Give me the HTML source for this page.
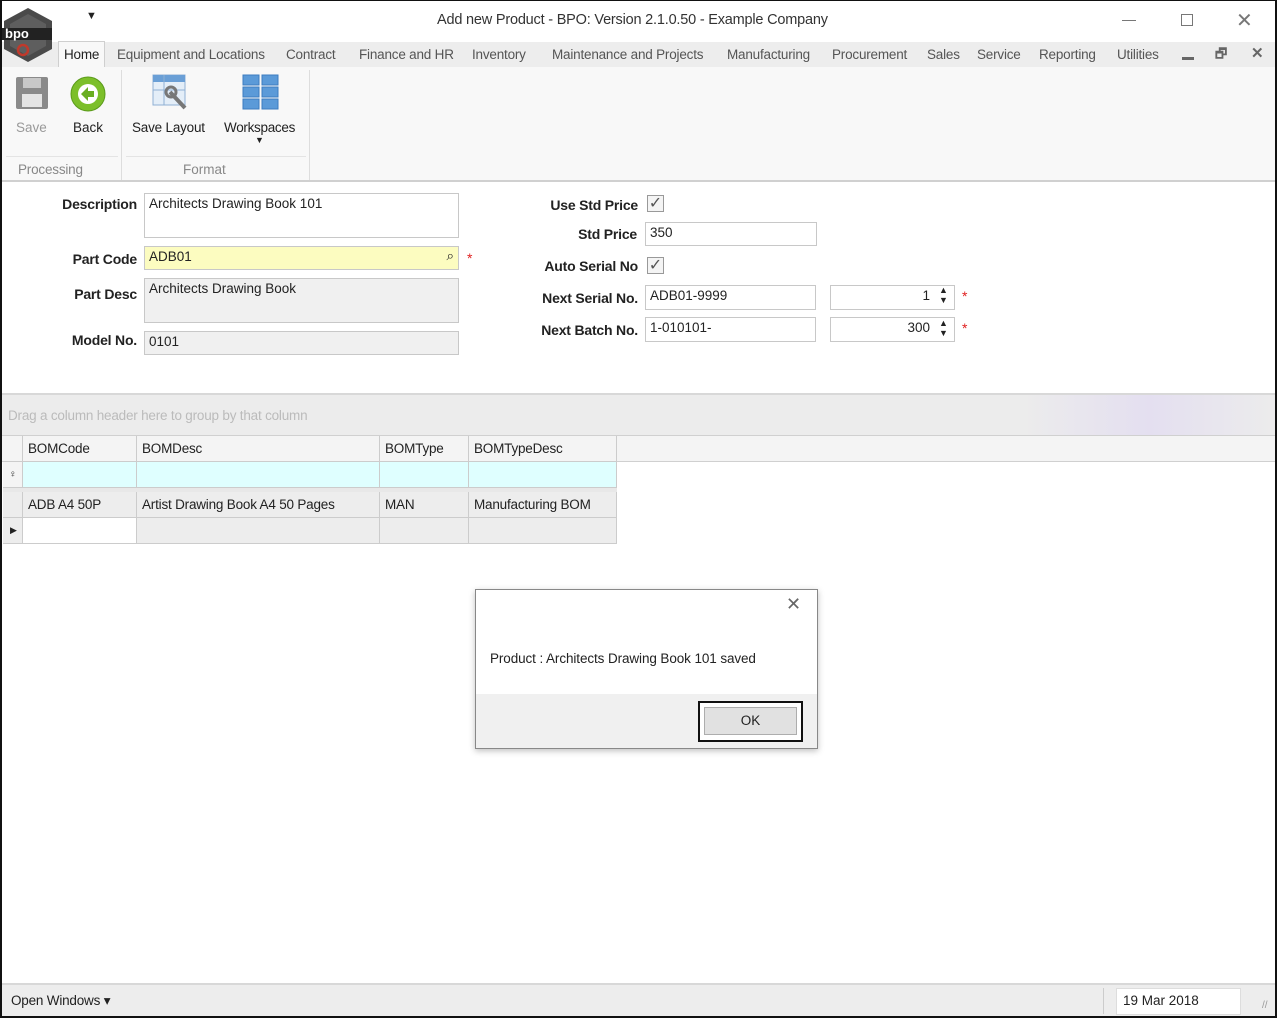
<!DOCTYPE html>
<html><head><meta charset="utf-8"><style>
*{box-sizing:border-box;margin:0;padding:0}
body{width:1277px;height:1018px;position:relative;overflow:hidden;background:#fff;font-family:"Liberation Sans",sans-serif;font-size:14px;color:#222}
.a{position:absolute;white-space:nowrap}
.win{position:absolute;left:0;top:0;width:1277px;height:1018px;border:2px solid #111;border-top-width:1px}
.box{position:absolute;border:1px solid #c8c8c8;background:#fff;padding:2px 4px;font-size:13.5px}
.lbl{position:absolute;font-weight:bold;font-size:14px;text-align:right;white-space:nowrap;letter-spacing:-0.2px}
.cb{position:absolute;width:17px;height:17px;border:1px solid #999;background:#f4f4f4;font-size:16px;line-height:15px;text-align:center;color:#555}
.star{position:absolute;color:#e02020;font-size:14px}
.cell{position:absolute;border-right:1px solid #ccc;border-bottom:1px solid #ccc;padding:5px 5px;font-size:13.5px;white-space:nowrap;letter-spacing:-0.2px}
.tab{position:absolute;top:47px;color:#555;font-size:13.5px;letter-spacing:-0.2px;white-space:nowrap}
</style></head><body>
<!-- title -->
<div class="a" style="left:0;top:0;width:1277px;height:42px;background:#fff"></div>
<div class="a" style="left:86px;top:10px;font-size:11px">▼</div>
<div class="a" style="left:437px;top:12px;font-size:14.5px;color:#333;letter-spacing:-0.2px">Add new Product - BPO: Version 2.1.0.50 - Example Company</div>
<div class="a" style="left:1122px;top:20px;width:14px;height:1px;background:#777"></div>
<div class="a" style="left:1181px;top:14px;width:12px;height:12px;border:1px solid #777"></div>
<div class="a" style="left:1236px;top:8px;font-size:20px;color:#777">✕</div>
<!-- tabs -->
<div class="a" style="left:0;top:42px;width:1277px;height:25px;background:#ededed"></div>
<div class="a" style="left:58px;top:41px;width:47px;height:27px;background:#f8f8f8;border:1px solid #cfcfcf;border-bottom:none"></div>
<div class="tab" style="left:64px;color:#222">Home</div>
<div class="tab" style="left:117px">Equipment and Locations</div>
<div class="tab" style="left:286px">Contract</div>
<div class="tab" style="left:359px">Finance and HR</div>
<div class="tab" style="left:472px">Inventory</div>
<div class="tab" style="left:552px">Maintenance and Projects</div>
<div class="tab" style="left:727px">Manufacturing</div>
<div class="tab" style="left:832px">Procurement</div>
<div class="tab" style="left:927px">Sales</div>
<div class="tab" style="left:977px">Service</div>
<div class="tab" style="left:1039px">Reporting</div>
<div class="tab" style="left:1117px">Utilities</div>
<div class="a" style="left:1182px;top:57px;width:12px;height:3px;background:#666"></div>
<div class="a" style="left:1215px;top:45px;font-size:13px;color:#666;font-weight:bold">🗗</div>
<div class="a" style="left:1251px;top:44px;font-size:15px;color:#666;font-weight:bold">✕</div>
<svg class="a" style="left:2px;top:6px" width="52" height="58" viewBox="0 0 52 58"><polygon points="26,2 50,15 50,43 26,56 2,43 2,15" fill="#4a4a4a"/><polygon points="26,8 44,18 44,40 26,50 8,40 8,18" fill="#5e5e5e"/><rect x="0" y="22" width="50" height="12" fill="#222"/><text x="3" y="32" font-size="13" fill="#fff" font-family="Liberation Sans" font-weight="bold">bpo</text><circle cx="21" cy="44" r="5" fill="none" stroke="#c0392b" stroke-width="2.5"/></svg>
<!-- ribbon -->
<div class="a" style="left:0;top:67px;width:1277px;height:115px;background:#f8f8f8;border-bottom:2px solid #d0d0d0"></div>
<div class="a" style="left:121px;top:70px;width:1px;height:110px;background:#ddd"></div>
<div class="a" style="left:309px;top:70px;width:1px;height:110px;background:#ddd"></div>
<div class="a" style="left:6px;top:156px;width:112px;height:1px;background:#e4e4e4"></div>
<div class="a" style="left:126px;top:156px;width:180px;height:1px;background:#e4e4e4"></div>
<svg class="a" style="left:15px;top:76px" width="34" height="34"><rect x="1" y="1" width="32" height="32" rx="2" fill="#8a8a8a"/><rect x="8" y="2" width="18" height="10" fill="#c8c8c8"/><rect x="7" y="18" width="20" height="13" fill="#e4e4e4"/></svg>
<svg class="a" style="left:69px;top:75px" width="38" height="38"><circle cx="19" cy="19" r="17" fill="#7cbf2a" stroke="#5a9a1a"/><circle cx="19" cy="19" r="10" fill="#fff"/><polygon points="12,19 19,12 19,16 25,16 25,22 19,22 19,26" fill="#6aae22"/></svg>
<svg class="a" style="left:152px;top:74px" width="38" height="38"><rect x="1" y="1" width="32" height="30" fill="#e4eef8" stroke="#8fb0d4"/><rect x="1" y="1" width="32" height="7" fill="#6a9fd6"/><line x1="12" y1="1" x2="12" y2="31" stroke="#8fb0d4"/><line x1="1" y1="16" x2="33" y2="16" stroke="#8fb0d4"/><path d="M18 18 L33 34" stroke="#777" stroke-width="4"/><circle cx="19" cy="18" r="5" fill="none" stroke="#777" stroke-width="3"/></svg>
<svg class="a" style="left:242px;top:74px" width="38" height="38"><g fill="#5b9ad8" stroke="#3d7cc0"><rect x="1" y="1" width="16" height="10"/><rect x="20" y="1" width="16" height="10"/><rect x="1" y="13" width="16" height="10"/><rect x="20" y="13" width="16" height="10"/><rect x="1" y="25" width="16" height="10"/><rect x="20" y="25" width="16" height="10"/></g></svg>
<div class="a" style="left:16px;top:120px;color:#999;font-size:13.5px">Save</div>
<div class="a" style="left:73px;top:120px;font-size:13.5px">Back</div>
<div class="a" style="left:132px;top:120px;font-size:13.5px;letter-spacing:-0.2px">Save Layout</div>
<div class="a" style="left:224px;top:120px;font-size:13.5px;letter-spacing:-0.3px">Workspaces</div>
<div class="a" style="left:255px;top:135px;font-size:9px">▼</div>
<div class="a" style="left:18px;top:162px;color:#888;font-size:13.5px;letter-spacing:-0.2px">Processing</div>
<div class="a" style="left:183px;top:162px;color:#888;font-size:13.5px">Format</div>
<!-- form left -->
<div class="lbl" style="left:40px;width:97px;top:196px">Description</div>
<div class="box" style="left:144px;top:193px;width:315px;height:45px">Architects Drawing Book 101</div>
<div class="lbl" style="left:40px;width:97px;top:251px">Part Code</div>
<div class="box" style="left:144px;top:246px;width:315px;height:24px;background:#fcfcc0">ADB01<span style="position:absolute;right:4px;top:1px">⌕</span></div>
<div class="star" style="left:467px;top:250px">*</div>
<div class="lbl" style="left:40px;width:97px;top:286px">Part Desc</div>
<div class="box" style="left:144px;top:278px;width:315px;height:45px;background:#f0f0f0">Architects Drawing Book</div>
<div class="lbl" style="left:40px;width:97px;top:332px">Model No.</div>
<div class="box" style="left:144px;top:331px;width:315px;height:24px;background:#f0f0f0">0101</div>
<!-- form right -->
<div class="lbl" style="left:500px;width:138px;top:197px">Use Std Price</div>
<div class="cb" style="left:647px;top:195px">✓</div>
<div class="lbl" style="left:500px;width:137px;top:226px">Std Price</div>
<div class="box" style="left:645px;top:222px;width:172px;height:24px">350</div>
<div class="lbl" style="left:500px;width:138px;top:258px">Auto Serial No</div>
<div class="cb" style="left:647px;top:257px">✓</div>
<div class="lbl" style="left:500px;width:138px;top:290px">Next Serial No.</div>
<div class="box" style="left:645px;top:285px;width:171px;height:25px">ADB01-9999</div>
<div class="box" style="left:830px;top:285px;width:125px;height:25px;text-align:right;padding-right:24px">1</div>
<div class="a" style="left:939px;top:285px;font-size:9px;line-height:10px">▲<br>▼</div>
<div class="star" style="left:962px;top:288px">*</div>
<div class="lbl" style="left:500px;width:138px;top:322px">Next Batch No.</div>
<div class="box" style="left:645px;top:317px;width:171px;height:25px">1-010101-</div>
<div class="box" style="left:830px;top:317px;width:125px;height:25px;text-align:right;padding-right:24px">300</div>
<div class="a" style="left:939px;top:318px;font-size:9px;line-height:10px">▲<br>▼</div>
<div class="star" style="left:962px;top:320px">*</div>
<!-- grid -->
<div class="a" style="left:0;top:393px;width:1277px;height:43px;background:linear-gradient(to right,#ececec 80%,#e4dff0 90%,#ececec);border-top:2px solid #d8d8d8;border-bottom:1px solid #d0d0d0"></div>
<div class="a" style="left:8px;top:408px;color:#bbb;font-size:13.5px;letter-spacing:-0.2px">Drag a column header here to group by that column</div>
<div class="a" style="left:0;top:436px;width:1277px;height:26px;background:#f4f4f4;border-bottom:1px solid #d0d0d0"></div>
<div class="cell" style="left:3px;top:436px;width:20px;height:26px"></div>
<div class="cell" style="left:23px;top:436px;width:114px;height:26px">BOMCode</div>
<div class="cell" style="left:137px;top:436px;width:243px;height:26px">BOMDesc</div>
<div class="cell" style="left:380px;top:436px;width:89px;height:26px">BOMType</div>
<div class="cell" style="left:469px;top:436px;width:148px;height:26px">BOMTypeDesc</div>
<div class="a" style="left:23px;top:462px;width:594px;height:26px;background:#dfffff"></div>
<div class="cell" style="left:3px;top:462px;width:20px;height:26px;background:#f4f4f4;font-size:10px;padding:7px 6px">♀</div>
<div class="cell" style="left:23px;top:462px;width:114px;height:26px"></div>
<div class="cell" style="left:137px;top:462px;width:243px;height:26px"></div>
<div class="cell" style="left:380px;top:462px;width:89px;height:26px"></div>
<div class="cell" style="left:469px;top:462px;width:148px;height:26px"></div>
<div class="a" style="left:3px;top:488px;width:614px;height:4px;background:#e8e8e8"></div>
<div class="a" style="left:3px;top:492px;width:614px;height:52px;background:#ededed"></div>
<div class="cell" style="left:3px;top:492px;width:20px;height:26px"></div>
<div class="cell" style="left:23px;top:492px;width:114px;height:26px">ADB A4 50P</div>
<div class="cell" style="left:137px;top:492px;width:243px;height:26px">Artist Drawing Book A4 50 Pages</div>
<div class="cell" style="left:380px;top:492px;width:89px;height:26px">MAN</div>
<div class="cell" style="left:469px;top:492px;width:148px;height:26px">Manufacturing BOM</div>
<div class="cell" style="left:3px;top:518px;width:20px;height:26px;font-size:9px;padding:7px 7px">▶</div>
<div class="cell" style="left:23px;top:518px;width:114px;height:26px;background:#fff"></div>
<div class="cell" style="left:137px;top:518px;width:243px;height:26px"></div>
<div class="cell" style="left:380px;top:518px;width:89px;height:26px"></div>
<div class="cell" style="left:469px;top:518px;width:148px;height:26px"></div>
<!-- dialog -->
<div class="a" style="left:475px;top:589px;width:343px;height:160px;background:#fff;border:1px solid #888;box-shadow:0 2px 6px rgba(0,0,0,.25)"></div>
<div class="a" style="left:786px;top:594px;font-size:18px;color:#666">✕</div>
<div class="a" style="left:490px;top:651px;font-size:13.5px;letter-spacing:-0.1px">Product : Architects Drawing Book 101 saved</div>
<div class="a" style="left:476px;top:694px;width:341px;height:54px;background:#f0f0f0"></div>
<div class="a" style="left:698px;top:701px;width:105px;height:41px;border:2px solid #111;background:#fff"></div>
<div class="a" style="left:704px;top:707px;width:93px;height:28px;border:1px solid #adadad;background:#e1e1e1;text-align:center;line-height:26px;font-size:13.5px">OK</div>
<!-- status -->
<div class="a" style="left:0;top:983px;width:1277px;height:35px;background:#ededed;border-top:2px solid #d8d8d8"></div>
<div class="a" style="left:11px;top:993px;font-size:13.5px;letter-spacing:-0.2px">Open Windows ▾</div>
<div class="a" style="left:1103px;top:988px;width:1px;height:26px;background:#ccc"></div>
<div class="box" style="left:1116px;top:988px;width:125px;height:27px;border-color:#ddd;padding:4px 6px">19 Mar 2018</div>
<div class="a" style="left:1262px;top:1000px;color:#999;font-size:10px">//</div>
<div class="win"></div>
</body></html>
